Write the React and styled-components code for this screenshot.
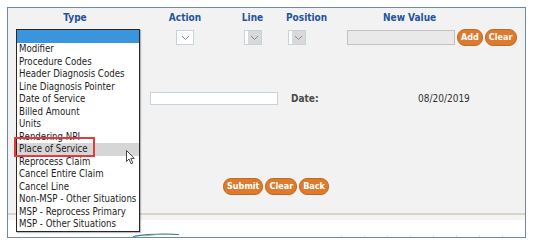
import React from 'react';
import styled, { createGlobalStyle } from 'styled-components';

const GlobalStyle = createGlobalStyle`
    body {
        margin: 0;
        background: #ffffff;
        font-family: 'DejaVu Sans Condensed', 'DejaVu Sans', sans-serif;
    }
`;

const Frame = styled.div`
    position: relative;
    box-sizing: border-box;
    margin: 7px 0 0 7px;
    width: 519px;
    height: 231px;
    border: 1px solid #6f88a9;
    background: #ffffff;
    display: flex;
    flex-direction: column;
`;

const Form = styled.div`
    background: #f2f2f2;
    height: 205px;
    display: flex;
    flex-direction: column;
`;

const Grid = styled.div`
    display: grid;
    grid-template-columns: 134px 86px 49px 61px 1fr;
    align-items: center;
    height: ${p => p.h}px;
    margin-top: ${p => p.mt || 0}px;
`;

const Head = styled.div`
    font-family: 'DejaVu Sans Condensed', 'DejaVu Sans', sans-serif;
    font-weight: bold;
    font-size: 10px;
    color: #24539b;
    justify-self: ${p => (p.start ? 'start' : 'center')};
    margin-left: ${p => p.ml || 0}px;
`;

const Cell = styled.div`
    display: flex;
    align-items: center;
    justify-self: ${p => (p.start ? 'start' : 'center')};
    margin-left: ${p => p.ml || 0}px;
    gap: 2px;
`;

const SelectBox = styled.div`
    box-sizing: border-box;
    width: 18px;
    height: 15px;
    border: 1px solid #c5d3dd;
    background: ${p => (p.disabled ? 'linear-gradient(to right, #ffffff 0 3px, #d9d9d9 3px)' : '#ffffff')};
    display: flex;
    align-items: center;
    justify-content: center;
    padding-left: ${p => (p.disabled ? 3 : 0)}px;
`;

const TextInput = styled.div`
    box-sizing: border-box;
    width: ${p => p.w}px;
    height: ${p => p.h}px;
    background: ${p => p.bg || '#ffffff'};
    border: 1px solid ${p => p.bd || '#c6d3dc'};
`;

const Pill = styled.button`
    box-sizing: border-box;
    height: 17px;
    padding: 0 3px;
    border: 1px solid #c46a22;
    border-radius: 8px;
    background: #dc7b2e;
    color: #ffffff;
    font-family: 'DejaVu Sans Condensed', 'DejaVu Sans', sans-serif;
    font-weight: bold;
    font-size: 9px;
    line-height: 15px;
`;

const DetailRow = styled.div`
    display: flex;
    align-items: center;
    height: 12px;
    margin-top: 47px;
    padding-left: 142px;
`;

const Label = styled.div`
    width: 127px;
    margin-left: 13px;
    font-weight: bold;
    font-size: 10px;
    color: #4a4a4a;
`;

const Value = styled.div`
    font-size: 10px;
    color: #333333;
`;

const ButtonRow = styled.div`
    display: flex;
    gap: 2px;
    margin-top: 74px;
    padding-left: 215px;
`;

const Divider = styled.div`
    height: 2px;
    background: #d9d4c6;
`;

const Strip = styled.div`
    height: 5px;
    background: #f4f4f4;
`;

const Footer = styled.div`
    flex: 1;
    display: flex;
    align-items: flex-end;
    justify-content: space-between;
    padding: 0 4px 0 125px;
`;

const Listbox = styled.div`
    position: absolute;
    left: 8px;
    top: 21px;
    box-sizing: border-box;
    width: 124px;
    border: 1px solid #262626;
    background: #ffffff;
    box-shadow: 1px 1px 1px rgba(0, 0, 0, 0.25);
`;

const Option = styled.div`
    position: relative;
    height: ${p => (p.blank ? 13 : 12.5)}px;
    line-height: 12.5px;
    padding-left: 2px;
    font-size: 9.6px;
    color: #1e1e1e;
    white-space: nowrap;
    background: ${p => (p.blank ? '#3a95dc' : p.hover ? '#d6d6d6' : 'transparent')};
`;

const Mark = styled.div`
    position: absolute;
    left: -3px;
    top: -6px;
    width: 81px;
    height: 20px;
    box-sizing: border-box;
    border: 2px solid #e23b3f;
`;

const Pointer = styled.svg`
    position: absolute;
    left: 118px;
    top: 142px;
`;

const Chevron = () => (
    <svg width="9" height="6" viewBox="0 0 9 6">
        <polyline points="1,1 4.5,4.5 8,1" fill="none" stroke="#8a8a8a" strokeWidth="1" />
    </svg>
);

const items = [
    'Modifier',
    'Procedure Codes',
    'Header Diagnosis Codes',
    'Line Diagnosis Pointer',
    'Date of Service',
    'Billed Amount',
    'Units',
    'Rendering NPI',
    'Place of Service',
    'Reprocess Claim',
    'Cancel Entire Claim',
    'Cancel Line',
    'Non-MSP - Other Situations',
    'MSP - Reprocess Primary',
    'MSP - Other Situations',
];

export default function App() {
    return (
        <>
            <GlobalStyle />
            <Frame>
                <Form>
                    <Grid h={18}>
                        <Head>Type</Head>
                        <Head>Action</Head>
                        <Head>Line</Head>
                        <Head start ml={9}>Position</Head>
                        <Head start ml={45}>New Value</Head>
                    </Grid>
                    <Grid h={16} mt={3}>
                        <div />
                        <Cell><SelectBox><Chevron /></SelectBox></Cell>
                        <Cell><SelectBox disabled><Chevron /></SelectBox></Cell>
                        <Cell start ml={11}><SelectBox disabled><Chevron /></SelectBox></Cell>
                        <Cell start ml={9}>
                            <TextInput w={108} h={15} bg="#e9e9e9" bd="#c2c2c2" />
                            <Pill>Add</Pill>
                            <Pill>Clear</Pill>
                        </Cell>
                    </Grid>
                    <DetailRow>
                        <TextInput w={128} h={13} />
                        <Label>Date:</Label>
                        <Value>08/20/2019</Value>
                    </DetailRow>
                    <ButtonRow>
                        <Pill>Submit</Pill>
                        <Pill>Clear</Pill>
                        <Pill>Back</Pill>
                    </ButtonRow>
                </Form>
                <Divider />
                <Strip />
                <Footer>
                    <svg width="46" height="4" viewBox="0 0 46 4">
                        <path d="M0 3.5 Q20 0 46 1.5" fill="none" stroke="#3f78b8" strokeWidth="1.2" />
                        <path d="M10 3 Q26 0.8 40 1" fill="none" stroke="#8fbf6a" strokeWidth="0.8" />
                    </svg>
                    <svg width="180" height="2" viewBox="0 0 180 2">
                        <line x1="0" y1="1" x2="180" y2="1" stroke="#b9cde3" strokeWidth="1" strokeDasharray="1 22" />
                    </svg>
                </Footer>
                <Listbox>
                    <Option blank />
                    {items.map(item => (
                        <Option key={item} hover={item === 'Place of Service'}>
                            {item}
                            {item === 'Place of Service' && <Mark />}
                        </Option>
                    ))}
                </Listbox>
                <Pointer width="10" height="15" viewBox="0 0 10 15">
                    <path d="M0.5 0.5 L0.5 11.5 L3 9 L5 13.8 L6.8 13 L4.8 8.4 L8.3 8.4 Z" fill="#ffffff" stroke="#333333" strokeWidth="0.9" strokeLinejoin="round" />
                </Pointer>
            </Frame>
        </>
    );
}
